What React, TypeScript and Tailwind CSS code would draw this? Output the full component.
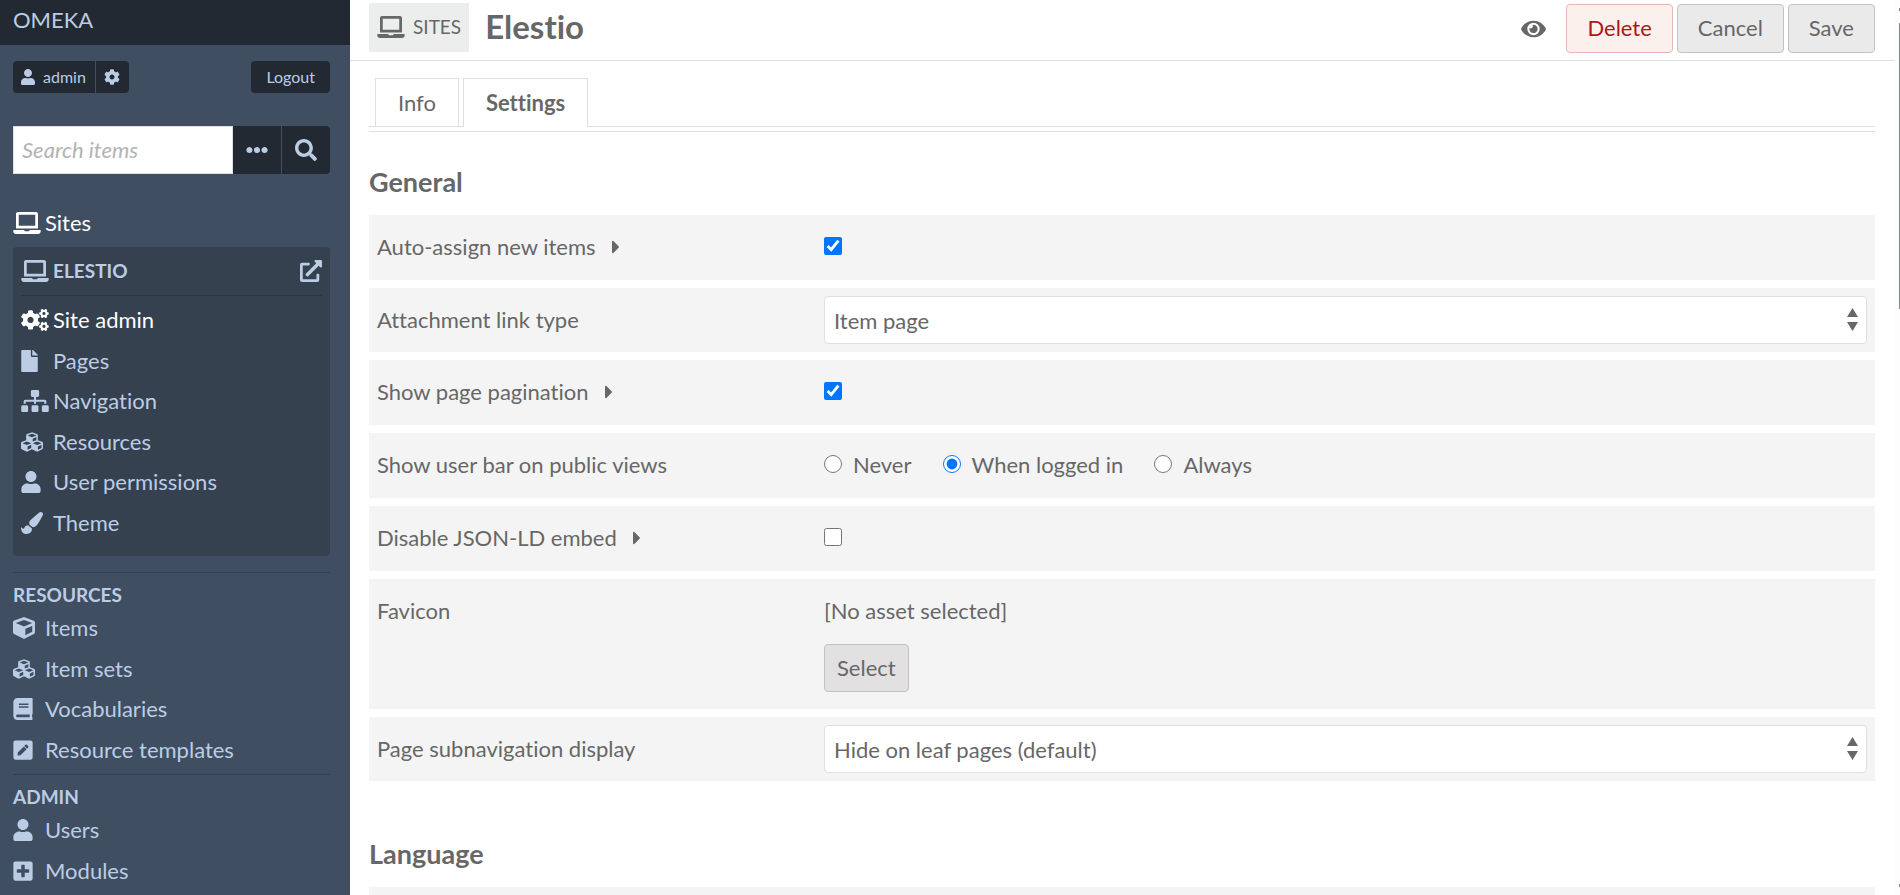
import { useState } from "react";
import type { ReactNode } from "react";
import type { IconType } from "react-icons";
import {
  FaBook,
  FaCaretRight,
  FaCog,
  FaCogs,
  FaCube,
  FaCubes,
  FaEllipsisH,
  FaExternalLinkAlt,
  FaEye,
  FaFile,
  FaLaptop,
  FaPaintBrush,
  FaPenSquare,
  FaPlusSquare,
  FaSearch,
  FaSitemap,
  FaUser,
} from "react-icons/fa";

type NavItem = { label: string; icon: IconType; width: string; active?: boolean };

const siteNav: NavItem[] = [
  { label: "Site admin", icon: FaCogs, width: "w-7", active: true },
  { label: "Pages", icon: FaFile, width: "w-[17px]" },
  { label: "Navigation", icon: FaSitemap, width: "w-7" },
  { label: "Resources", icon: FaCubes, width: "w-[22px]" },
  { label: "User permissions", icon: FaUser, width: "w-5" },
  { label: "Theme", icon: FaPaintBrush, width: "w-[22px]" },
];

const resourceNav: NavItem[] = [
  { label: "Items", icon: FaCube, width: "w-[22px]" },
  { label: "Item sets", icon: FaCubes, width: "w-[22px]" },
  { label: "Vocabularies", icon: FaBook, width: "w-5" },
  { label: "Resource templates", icon: FaPenSquare, width: "w-5" },
];

const adminNav: NavItem[] = [
  { label: "Users", icon: FaUser, width: "w-5" },
  { label: "Modules", icon: FaPlusSquare, width: "w-5" },
];

function NavLinks({ items }: { items: NavItem[] }) {
  return (
    <ul>
      {items.map(({ label, icon: Icon, width, active }) => (
        <li key={label} className="odd:mb-[9px] even:mb-2">
          <a href="#" className={`flex h-8 items-center ${active ? "text-white" : ""}`}>
            <span className="flex w-8 shrink-0">
              <Icon className={`h-[22px] ${width}`} />
            </span>
            {label}
          </a>
        </li>
      ))}
    </ul>
  );
}

function NavSection({ title, items }: { title: string; items: NavItem[] }) {
  return (
    <section className="border-t border-[#364150] pt-[7px]">
      <h4 className="flex h-8 items-center pb-0.5 text-[19px] font-bold uppercase">{title}</h4>
      <NavLinks items={items} />
    </section>
  );
}

function Sidebar() {
  return (
    <header className="w-[350px] shrink-0 overflow-hidden bg-[#404e61] text-[#bbcde5]">
      <div className="flex h-[45px] items-center bg-[#232932] px-[13px] pb-[6px]">
        <a href="#">OMEKA</a>
      </div>

      <div className="pr-5 pl-[13px]">
        <div className="flex justify-between pt-4 text-[16px]">
          <div className="flex gap-px">
            <a href="#" className="flex h-8 items-center gap-2 rounded-l bg-[#232932] pr-[9px] pl-2">
              <FaUser className="h-4 w-3.5" />
              admin
            </a>
            <a
              href="#"
              aria-label="User settings"
              className="flex h-8 w-[33px] items-center justify-center rounded-r bg-[#232932]"
            >
              <FaCog className="size-4" />
            </a>
          </div>
          <a href="#" className="flex h-8 items-center rounded bg-[#232932] px-[15px]">
            Logout
          </a>
        </div>

        <form className="mt-[33px] flex h-12" onSubmit={(e) => e.preventDefault()}>
          <input
            type="text"
            aria-label="Search items"
            placeholder="Search items"
            className="min-w-0 flex-1 border border-[#dfdfdf] bg-white px-2 text-[#676767] placeholder:text-[#b3b3b3] placeholder:italic"
          />
          <button
            type="button"
            aria-label="Advanced options"
            className="flex w-12 items-center justify-center bg-[#232932]"
          >
            <FaEllipsisH className="size-[22px]" />
          </button>
          <button
            type="submit"
            aria-label="Search"
            className="flex w-[49px] items-center justify-center rounded-r border-l border-[#404e61] bg-[#232932]"
          >
            <FaSearch className="size-[22px]" />
          </button>
        </form>

        <nav className="mt-[33px]">
          <a href="#" className="flex h-8 items-center gap-1 text-white">
            <FaLaptop className="h-[22px] w-7" />
            Sites
          </a>

          <div className="mt-2 mb-4 rounded bg-[#364150] px-2 pb-[9px]">
            <div className="flex h-[49px] items-center justify-between border-b border-[#2b3440]">
              <a href="#" className="flex items-center gap-1 text-[19px] font-bold uppercase">
                <FaLaptop className="h-[22px] w-7" />
                Elestio
              </a>
              <a href="#" aria-label="View site">
                <FaExternalLinkAlt className="size-[22px]" />
              </a>
            </div>
            <div className="pt-2">
              <NavLinks items={siteNav} />
            </div>
          </div>

          <NavSection title="Resources" items={resourceNav} />
          <NavSection title="Admin" items={adminNav} />
        </nav>
      </div>
    </header>
  );
}

type FieldProps = {
  label: string;
  htmlFor?: string;
  info?: boolean;
  children: ReactNode;
};

function Field({ label, htmlFor, info, children }: FieldProps) {
  return (
    <div className="flex bg-[#f4f4f4] p-2">
      <div className="flex h-12 w-[30%] shrink-0 items-center">
        <label htmlFor={htmlFor}>{label}</label>
        {info && (
          <button type="button" aria-label="Expand" className="ml-4">
            <FaCaretRight className="h-[22px] w-2" />
          </button>
        )}
      </div>
      <div className="min-w-0 flex-1">{children}</div>
    </div>
  );
}

function Checkbox({ id, checked }: { id: string; checked?: boolean }) {
  return (
    <div className="flex h-[49px] items-center pb-[3px]">
      <input id={id} type="checkbox" defaultChecked={checked} className="size-[18px]" />
    </div>
  );
}

function Select({ id, value }: { id: string; value: string }) {
  return (
    <div className="relative">
      <select
        id={id}
        className="block h-12 w-full appearance-none rounded border border-[#dfdfdf] bg-white px-[9px] pt-0.5"
      >
        <option>{value}</option>
      </select>
      <svg
        viewBox="0 0 11 23"
        aria-hidden="true"
        className="pointer-events-none absolute top-3 right-[9px] h-[23px] w-[11px] fill-[#676767]"
      >
        <path d="M5.5 0 11 9H0zM0 14h11l-5.5 9z" />
      </svg>
    </div>
  );
}

function UserBarOptions() {
  const [value, setValue] = useState("When logged in");
  return (
    <div className="flex h-[49px] items-center gap-[31px] pb-0.5">
      {["Never", "When logged in", "Always"].map((option) => (
        <label key={option} className="flex items-center gap-[11px]">
          <input
            type="radio"
            name="user-bar"
            checked={value === option}
            onChange={() => setValue(option)}
            className="mb-0.5 size-[18px]"
          />
          {option}
        </label>
      ))}
    </div>
  );
}

function PageHeader() {
  return (
    <div className="flex h-[61px] shrink-0 items-start justify-between border-b border-[#dfdfdf] pt-[3px] pr-5 pl-[19px]">
      <div className="flex items-center gap-4">
        <a
          href="#"
          className="flex h-[49px] items-center gap-2 bg-[#eceeed] px-2 pb-0.5 text-[19px] uppercase"
        >
          <FaLaptop className="h-[22px] w-7" />
          Sites
        </a>
        <h1 className="pb-0.5 text-[33px] leading-[47px] font-bold">Elestio</h1>
      </div>
      <div className="flex items-center gap-1 pt-px">
        <a href="#" aria-label="View site" className="mr-4">
          <FaEye className="h-[22px] w-[25px]" />
        </a>
        <button
          type="button"
          className="h-[49px] rounded border border-[#e3b9b3] bg-[#fcf0ed] px-5 pb-0.5 text-[#a91919]"
        >
          Delete
        </button>
        <button type="button" className="h-[49px] rounded border border-[#c1c3c2] bg-[#eaeaea] px-5 pb-0.5">
          Cancel
        </button>
        <button type="button" className="h-[49px] rounded border border-[#c1c3c2] bg-[#eaeaea] px-5 pb-0.5">
          Save
        </button>
      </div>
    </div>
  );
}

export default function App() {
  return (
    <div className="flex h-screen bg-white font-['Lato',sans-serif] text-[22px] leading-8 text-[#676767] [font-variant-ligatures:none]">
      <Sidebar />

      <div className="flex min-w-0 flex-1 flex-col">
        <PageHeader />

        <main className="min-h-0 flex-1 overflow-y-auto pt-[17px] pr-5 pl-[19px] [scrollbar-width:none]">
          <div className="border-b border-[#dfdfdf] pb-1">
            <nav className="flex gap-1 border-b border-[#dfdfdf] pl-[6px]">
              <a href="#" className="flex h-12 items-center border border-b-0 border-[#dfdfdf] px-[22px]">
                Info
              </a>
              <a
                href="#"
                className="-mb-px flex h-[49px] items-center border border-b-0 border-[#dfdfdf] bg-white px-[22px] font-bold"
              >
                Settings
              </a>
            </nav>
          </div>

          <h2 className="mt-[34px] text-[27px] font-bold">General</h2>
          <div className="mt-[17px] flex flex-col gap-2">
            <Field label="Auto-assign new items" htmlFor="auto-assign" info>
              <Checkbox id="auto-assign" checked />
            </Field>
            <Field label="Attachment link type" htmlFor="link-type">
              <Select id="link-type" value="Item page" />
            </Field>
            <Field label="Show page pagination" htmlFor="pagination" info>
              <Checkbox id="pagination" checked />
            </Field>
            <Field label="Show user bar on public views">
              <UserBarOptions />
            </Field>
            <Field label="Disable JSON-LD embed" htmlFor="json-ld" info>
              <Checkbox id="json-ld" />
            </Field>
            <Field label="Favicon" htmlFor="favicon">
              <p className="flex h-12 items-center">[No asset selected]</p>
              <button
                id="favicon"
                type="button"
                className="my-[9px] block h-12 rounded border border-[#c1c3c2] bg-[#e2e0e1] px-3"
              >
                Select
              </button>
            </Field>
            <Field label="Page subnavigation display" htmlFor="subnav">
              <Select id="subnav" value="Hide on leaf pages (default)" />
            </Field>
          </div>

          <h2 className="mt-[57px] text-[27px] font-bold">Language</h2>
          <div className="mt-[17px] h-16 bg-[#f4f4f4]" />
        </main>
      </div>

      {/* scroll track */}
      <div aria-hidden="true" className="flex w-[5px] shrink-0 flex-col items-end bg-[#fdfdfd] pt-2 pb-2">
        <div className="h-[3px] w-px bg-[#858a8c]" />
        <div className="mt-3 h-[286px] w-px bg-[#858a8c]" />
        <div className="mt-auto h-[3px] w-px bg-[#858a8c]" />
      </div>
    </div>
  );
}
